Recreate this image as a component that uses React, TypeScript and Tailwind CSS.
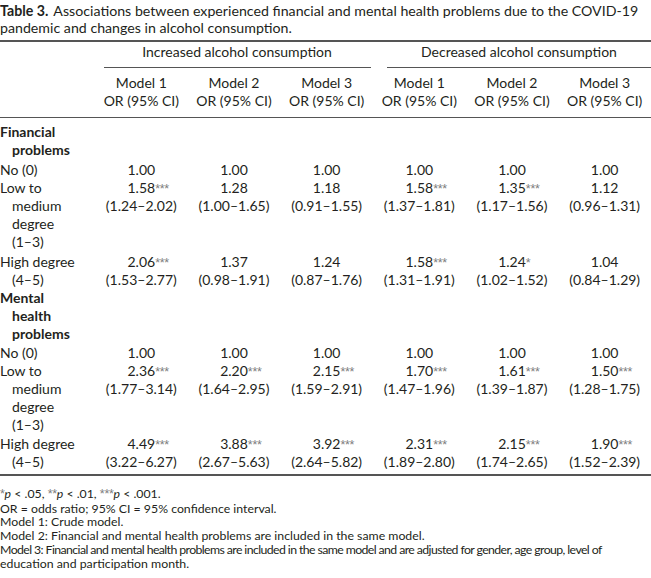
import React from 'react';

type Cell = { v: string; s?: string; ci?: string };
type Row = { label: string[]; cells: Cell[]; pad: string };

const financial: Row[] = [
  {
    label: ['No (0)'],
    pad: 'pt-[2px]',
    cells: [{ v: '1.00' }, { v: '1.00' }, { v: '1.00' }, { v: '1.00' }, { v: '1.00' }, { v: '1.00' }],
  },
  {
    label: ['Low to', 'medium', 'degree', '(1–3)'],
    pad: 'pt-0',
    cells: [
      { v: '1.58', s: '***', ci: '(1.24–2.02)' },
      { v: '1.28', ci: '(1.00–1.65)' },
      { v: '1.18', ci: '(0.91–1.55)' },
      { v: '1.58', s: '***', ci: '(1.37–1.81)' },
      { v: '1.35', s: '***', ci: '(1.17–1.56)' },
      { v: '1.12', ci: '(0.96–1.31)' },
    ],
  },
  {
    label: ['High degree', '(4–5)'],
    pad: 'pt-[2px]',
    cells: [
      { v: '2.06', s: '***', ci: '(1.53–2.77)' },
      { v: '1.37', ci: '(0.98–1.91)' },
      { v: '1.24', ci: '(0.87–1.76)' },
      { v: '1.58', s: '***', ci: '(1.31–1.91)' },
      { v: '1.24', s: '*', ci: '(1.02–1.52)' },
      { v: '1.04', ci: '(0.84–1.29)' },
    ],
  },
];

const mental: Row[] = [
  {
    label: ['No (0)'],
    pad: 'pt-px',
    cells: [{ v: '1.00' }, { v: '1.00' }, { v: '1.00' }, { v: '1.00' }, { v: '1.00' }, { v: '1.00' }],
  },
  {
    label: ['Low to', 'medium', 'degree', '(1–3)'],
    pad: 'pt-0',
    cells: [
      { v: '2.36', s: '***', ci: '(1.77–3.14)' },
      { v: '2.20', s: '***', ci: '(1.64–2.95)' },
      { v: '2.15', s: '***', ci: '(1.59–2.91)' },
      { v: '1.70', s: '***', ci: '(1.47–1.96)' },
      { v: '1.61', s: '***', ci: '(1.39–1.87)' },
      { v: '1.50', s: '***', ci: '(1.28–1.75)' },
    ],
  },
  {
    label: ['High degree', '(4–5)'],
    pad: 'pt-px',
    cells: [
      { v: '4.49', s: '***', ci: '(3.22–6.27)' },
      { v: '3.88', s: '***', ci: '(2.67–5.63)' },
      { v: '3.92', s: '***', ci: '(2.64–5.82)' },
      { v: '2.31', s: '***', ci: '(1.89–2.80)' },
      { v: '2.15', s: '***', ci: '(1.74–2.65)' },
      { v: '1.90', s: '***', ci: '(1.52–2.39)' },
    ],
  },
];

const grid = 'grid grid-cols-[95px_repeat(6,minmax(0,1fr))]';

function Stars({ s }: { s: string }) {
  return (
    <span className="font-['Liberation_Sans',sans-serif] text-[12.5px] text-[#7d7d7d] tracking-[-0.3px]">{s}</span>
  );
}

function Label({ lines, bold }: { lines: string[]; bold?: boolean }) {
  return (
    <div className={bold ? 'font-bold' : ''}>
      {lines.map((l, i) => (
        <div key={i} className={i > 0 ? 'pl-3' : ''}>
          {l}
        </div>
      ))}
    </div>
  );
}

function DataRow({ row }: { row: Row }) {
  return (
    <div className={`${grid} ${row.pad}`}>
      <Label lines={row.label} />
      {row.cells.map((c, i) => (
        <div key={i} className="flex flex-col items-center">
          <div className="relative">
            {c.v}
            {c.s && (
              <span className="absolute left-full top-0 whitespace-nowrap">
                <Stars s={c.s} />
              </span>
            )}
          </div>
          {c.ci && <div>{c.ci}</div>}
        </div>
      ))}
    </div>
  );
}

export default function App() {
  return (
    <div className="w-[651px] h-[578px] overflow-hidden bg-white text-[#231f20] font-['Lato','Noto_Sans',sans-serif] text-[14px] leading-[18px]">
      <div className="pt-[2px] text-[14.2px] leading-[17px]">
        <div className="flex whitespace-nowrap">
          <span className="font-bold mr-[5px]">Table 3.</span>
          <span>Associations between experienced financial and mental health problems due to the COVID-19</span>
        </div>
        <div>pandemic and changes in alcohol consumption.</div>
      </div>

      <div className="mt-[4px] h-[2px] bg-[#555]" />

      {/* group headings */}
      <div className={`${grid} pt-px`}>
        <div />
        <div className="col-span-3 flex flex-col">
          <div className="text-center pl-[6px]">Increased alcohol consumption</div>
          <div className="mt-[6px] ml-[9px] mr-[2px] h-px bg-[#555]" />
        </div>
        <div className="col-span-3 flex flex-col">
          <div className="text-center pl-[14px]">Decreased alcohol consumption</div>
          <div className="mt-[6px] ml-[14px] h-px bg-[#555]" />
        </div>
      </div>

      <div className={`${grid} pt-[6px] pb-[7px]`}>
        <div />
        {['Model 1', 'Model 2', 'Model 3', 'Model 1', 'Model 2', 'Model 3'].map((m, i) => (
          <div key={i} className="text-center">
            <div>{m}</div>
            <div className="whitespace-nowrap">OR (95% CI)</div>
          </div>
        ))}
      </div>

      <div className="h-px bg-[#555]" />

      <div className="pt-[5px]">
        <Label lines={['Financial', 'problems']} bold />
      </div>
      {financial.map((r, i) => (
        <DataRow key={i} row={r} />
      ))}
      <Label lines={['Mental', 'health', 'problems']} bold />
      {mental.map((r, i) => (
        <DataRow key={i} row={r} />
      ))}

      <div className="mt-[3px] h-[2px] bg-[#555]" />

      {/* footnotes */}
      <div className="pt-[11px] text-[12.3px] leading-[13.7px]">
        <div>
          <Stars s="*" />
          <i>p</i> &lt; .05, <Stars s="**" />
          <i>p</i> &lt; .01, <Stars s="***" />
          <i>p</i> &lt; .001.
        </div>
        <div>OR = odds ratio; 95% CI = 95% confidence interval.</div>
        <div>Model 1: Crude model.</div>
        <div>Model 2: Financial and mental health problems are included in the same model.</div>
        <div className="whitespace-nowrap tracking-[-0.6px]">
          Model 3: Financial and mental health problems are included in the same model and are adjusted for gender, age group, level of
        </div>
        <div>education and participation month.</div>
      </div>
    </div>
  );
}
